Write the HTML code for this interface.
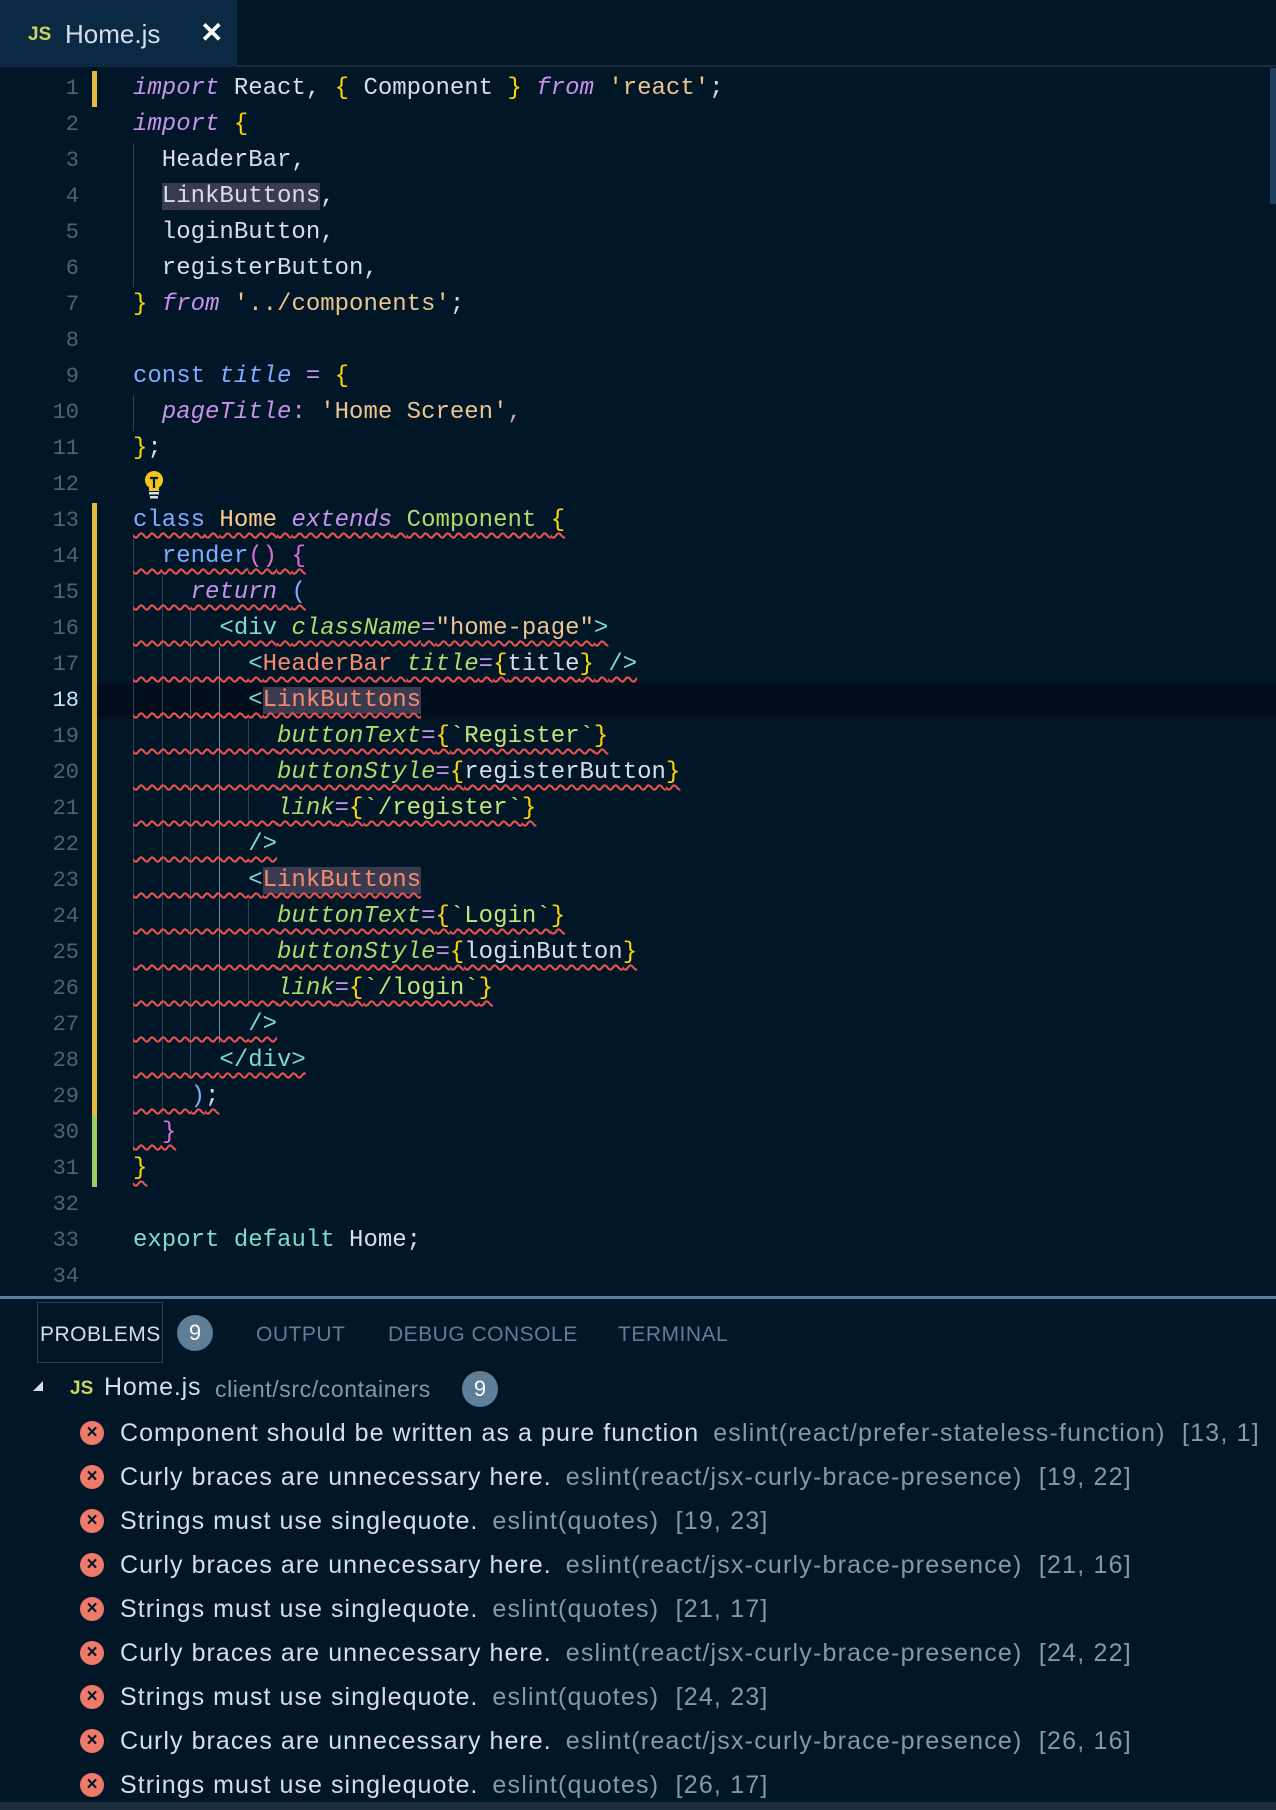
<!DOCTYPE html>
<html><head><meta charset="utf-8"><style>
*{margin:0;padding:0;box-sizing:border-box}
body{width:1276px;height:1810px;background:#011627;position:relative;overflow:hidden;font-family:"Liberation Sans",sans-serif}
.tabbar{position:absolute;left:0;top:0;width:1276px;height:67px;background:#011627;border-bottom:2px solid #1d2d3d}
.tab{position:absolute;left:0;top:0;width:237px;height:67px;background:#0b2942}
.tab .js{position:absolute;left:28px;top:24px;color:#cdd35c;font-weight:bold;font-size:19px}
.tab .nm{position:absolute;left:65px;top:19px;color:#d6deeb;font-size:26px}
.tab .x{position:absolute;left:200px;top:16px;color:#fff;font-size:28px;font-weight:bold}
.wrap{position:absolute;left:0;top:4px;width:1276px;height:1290px}
.ln{position:absolute;left:0;width:79px;text-align:right;font-family:"Liberation Mono",monospace;font-size:22px;line-height:36px;color:#4b6479}
.code{position:absolute;left:133px;font-family:"Liberation Mono",monospace;font-size:24px;line-height:36px;white-space:pre;color:#d6deeb}
.sq{text-decoration:underline wavy #ef5350;text-decoration-thickness:2px;text-underline-offset:6px}
.k{color:#c792ea;font-style:italic}.y{color:#ffd700}.s{color:#ecc48d}.b{color:#82aaff}.bi{color:#82aaff;font-style:italic}
.p{color:#c792ea}.pi{color:#c792ea;font-style:italic}.o{color:#ffcb8b}.g{color:#addb67}.gi{color:#addb67;font-style:italic}
.t{color:#7fdbca}.r{color:#f78c6c}.pk{color:#da70d6}.tl{color:#c5e478}
.hl{background:#3a3a50}
.gd{position:absolute;width:1px;background:#2a4257}
.mk{position:absolute;left:92px;width:5px}
.panel{position:absolute;left:0;top:1296px;width:1276px;height:3px;background:#5f7e97}
.ptab{position:absolute;top:1323px;font-size:21px;color:#637d96;letter-spacing:0.5px}
.badge{position:absolute;width:36px;height:36px;border-radius:50%;background:#5f7e97;color:#fff;font-size:22px;text-align:center;line-height:36px}
.err{position:absolute;left:120px;font-size:25px;color:#d6deeb;white-space:pre;line-height:30px;letter-spacing:1.05px}
.err .src{color:#8399ae;margin-left:6px;letter-spacing:1.2px}
.ic{position:absolute;left:80px;width:24px;height:24px;border-radius:50%;background:#ef7a6a;color:#011627;font-size:19px;font-weight:bold;text-align:center;line-height:24px}
</style></head><body>
<div class="tabbar"><div class="tab"><span class="js">JS</span><span class="nm">Home.js</span><span class="x">✕</span></div></div>
<div style="position:absolute;left:1270px;top:68px;width:6px;height:136px;background:#1e4060"></div>
<div class="wrap">
<div style="position:absolute;left:97px;top:679px;width:1179px;height:36px;background:#010f1c"></div>
<div class="mk" style="top:67px;height:36px;background:#e2b93d"></div>
<div class="mk" style="top:499px;height:612px;background:#e2b93d"></div>
<div class="mk" style="top:1111px;height:72px;background:#9ccc65"></div>
<div class="gd" style="left:133px;top:139px;height:144px"></div>
<div class="gd" style="left:133px;top:391px;height:36px"></div>
<div class="gd" style="left:133px;top:535px;height:612px"></div>
<div class="gd" style="left:162px;top:571px;height:540px"></div>
<div class="gd" style="left:190px;top:607px;height:468px;background:#3d5a75"></div>
<div class="gd" style="left:219px;top:643px;height:396px;background:#6a8aa5"></div>
<div class="gd" style="left:248px;top:715px;height:108px"></div>
<div class="gd" style="left:248px;top:895px;height:108px"></div>
<svg style="position:absolute;left:143px;top:466px" width="22" height="30" viewBox="0 0 22 30"><path d="M11 1a9 9 0 0 0-5 16.5V21h10v-3.5A9 9 0 0 0 11 1z" fill="#f5c518"/><path d="M7 8h8M11 8v10" stroke="#011627" stroke-width="2.2"/><rect x="6" y="22" width="10" height="2.5" fill="#d6deeb"/><rect x="7" y="26" width="8" height="2.5" fill="#d6deeb"/></svg>
<div class="ln" style="top:67px">1</div><div class="ln" style="top:103px">2</div><div class="ln" style="top:139px">3</div><div class="ln" style="top:175px">4</div><div class="ln" style="top:211px">5</div><div class="ln" style="top:247px">6</div><div class="ln" style="top:283px">7</div><div class="ln" style="top:319px">8</div><div class="ln" style="top:355px">9</div><div class="ln" style="top:391px">10</div><div class="ln" style="top:427px">11</div><div class="ln" style="top:463px">12</div><div class="ln" style="top:499px">13</div><div class="ln" style="top:535px">14</div><div class="ln" style="top:571px">15</div><div class="ln" style="top:607px">16</div><div class="ln" style="top:643px">17</div><div class="ln" style="top:679px;color:#c5e4fd">18</div><div class="ln" style="top:715px">19</div><div class="ln" style="top:751px">20</div><div class="ln" style="top:787px">21</div><div class="ln" style="top:823px">22</div><div class="ln" style="top:859px">23</div><div class="ln" style="top:895px">24</div><div class="ln" style="top:931px">25</div><div class="ln" style="top:967px">26</div><div class="ln" style="top:1003px">27</div><div class="ln" style="top:1039px">28</div><div class="ln" style="top:1075px">29</div><div class="ln" style="top:1111px">30</div><div class="ln" style="top:1147px">31</div><div class="ln" style="top:1183px">32</div><div class="ln" style="top:1219px">33</div><div class="ln" style="top:1255px">34</div>

<div class="code" style="top:67px"><span class="k">import</span> React, <span class="y">{</span> Component <span class="y">}</span> <span class="k">from</span> <span class="s">'react'</span>;</div>
<div class="code" style="top:103px"><span class="k">import</span> <span class="y">{</span></div>
<div class="code" style="top:139px">  HeaderBar,</div>
<div class="code" style="top:175px">  <span class="hl">LinkButtons</span>,</div>
<div class="code" style="top:211px">  loginButton,</div>
<div class="code" style="top:247px">  registerButton,</div>
<div class="code" style="top:283px"><span class="y">}</span> <span class="k">from</span> <span class="s">'../components'</span>;</div>
<div class="code" style="top:355px"><span class="b">const</span> <span class="bi">title</span> <span class="p">=</span> <span class="y">{</span></div>
<div class="code" style="top:391px">  <span class="pi">pageTitle</span><span class="p">:</span> <span class="s">'Home Screen'</span><span class="p">,</span></div>
<div class="code" style="top:427px"><span class="y">}</span>;</div>
<div class="code" style="top:499px"><span class="sq"><span class="b">class</span> <span class="o">Home</span> <span class="k">extends</span> <span class="g">Component</span> <span class="y">{</span></span></div>
<div class="code" style="top:535px"><span class="sq">  <span class="b">render</span><span class="pk">()</span> <span class="pk">{</span></span></div>
<div class="code" style="top:571px"><span class="sq">    <span class="k">return</span> <span class="b">(</span></span></div>
<div class="code" style="top:607px"><span class="sq">      <span class="t">&lt;div</span> <span class="gi">className</span><span class="p">=</span><span class="s">"home-page"</span><span class="t">&gt;</span></span></div>
<div class="code" style="top:643px"><span class="sq">        <span class="t">&lt;</span><span class="r">HeaderBar</span> <span class="gi">title</span><span class="p">=</span><span class="y">{</span>title<span class="y">}</span> <span class="t">/&gt;</span></span></div>
<div class="code" style="top:679px"><span class="sq">        <span class="t">&lt;</span><span class="r hl">LinkButtons</span></span></div>
<div class="code" style="top:715px"><span class="sq">          <span class="gi">buttonText</span><span class="p">=</span><span class="y">{</span><span class="tl">`Register`</span><span class="y">}</span></span></div>
<div class="code" style="top:751px"><span class="sq">          <span class="gi">buttonStyle</span><span class="p">=</span><span class="y">{</span>registerButton<span class="y">}</span></span></div>
<div class="code" style="top:787px"><span class="sq">          <span class="gi">link</span><span class="p">=</span><span class="y">{</span><span class="tl">`/register`</span><span class="y">}</span></span></div>
<div class="code" style="top:823px"><span class="sq">        <span class="t">/&gt;</span></span></div>
<div class="code" style="top:859px"><span class="sq">        <span class="t">&lt;</span><span class="r hl">LinkButtons</span></span></div>
<div class="code" style="top:895px"><span class="sq">          <span class="gi">buttonText</span><span class="p">=</span><span class="y">{</span><span class="tl">`Login`</span><span class="y">}</span></span></div>
<div class="code" style="top:931px"><span class="sq">          <span class="gi">buttonStyle</span><span class="p">=</span><span class="y">{</span>loginButton<span class="y">}</span></span></div>
<div class="code" style="top:967px"><span class="sq">          <span class="gi">link</span><span class="p">=</span><span class="y">{</span><span class="tl">`/login`</span><span class="y">}</span></span></div>
<div class="code" style="top:1003px"><span class="sq">        <span class="t">/&gt;</span></span></div>
<div class="code" style="top:1039px"><span class="sq">      <span class="t">&lt;/div&gt;</span></span></div>
<div class="code" style="top:1075px"><span class="sq">    <span class="b">)</span>;</span></div>
<div class="code" style="top:1111px"><span class="sq">  <span class="pk">}</span></span></div>
<div class="code" style="top:1147px"><span class="sq"><span class="y">}</span></span></div>
<div class="code" style="top:1219px"><span class="t">export</span> <span class="t">default</span> Home;</div>
</div>

<div class="panel"></div>
<div style="position:absolute;left:37px;top:1302px;width:126px;height:61px;border:1px solid #2a3f52"></div>
<div class="ptab" style="left:40px;color:#d6deeb">PROBLEMS</div>
<div class="badge" style="left:177px;top:1315px">9</div>
<div class="ptab" style="left:256px">OUTPUT</div>
<div class="ptab" style="left:388px">DEBUG CONSOLE</div>
<div class="ptab" style="left:618px">TERMINAL</div>

<div style="position:absolute;left:33px;top:1381px;width:0;height:0;border-left:10px solid transparent;border-bottom:10px solid #d6deeb"></div>
<div style="position:absolute;left:70px;top:1378px;color:#cdd35c;font-weight:bold;font-size:19px">JS</div>
<div style="position:absolute;left:104px;top:1373px;color:#d6deeb;font-size:25px;letter-spacing:0.8px">Home.js</div>
<div style="position:absolute;left:215px;top:1376px;color:#8399ae;font-size:23px;letter-spacing:0.6px">client/src/containers</div>
<div class="badge" style="left:462px;top:1371px">9</div>

<div class="ic" style="top:1421px">×</div><div class="err" style="top:1418px">Component should be written as a pure function <span class="src">eslint(react/prefer-stateless-function)  [13, 1]</span></div>
<div class="ic" style="top:1465px">×</div><div class="err" style="top:1462px">Curly braces are unnecessary here. <span class="src">eslint(react/jsx-curly-brace-presence)  [19, 22]</span></div>
<div class="ic" style="top:1509px">×</div><div class="err" style="top:1506px">Strings must use singlequote. <span class="src">eslint(quotes)  [19, 23]</span></div>
<div class="ic" style="top:1553px">×</div><div class="err" style="top:1550px">Curly braces are unnecessary here. <span class="src">eslint(react/jsx-curly-brace-presence)  [21, 16]</span></div>
<div class="ic" style="top:1597px">×</div><div class="err" style="top:1594px">Strings must use singlequote. <span class="src">eslint(quotes)  [21, 17]</span></div>
<div class="ic" style="top:1641px">×</div><div class="err" style="top:1638px">Curly braces are unnecessary here. <span class="src">eslint(react/jsx-curly-brace-presence)  [24, 22]</span></div>
<div class="ic" style="top:1685px">×</div><div class="err" style="top:1682px">Strings must use singlequote. <span class="src">eslint(quotes)  [24, 23]</span></div>
<div class="ic" style="top:1729px">×</div><div class="err" style="top:1726px">Curly braces are unnecessary here. <span class="src">eslint(react/jsx-curly-brace-presence)  [26, 16]</span></div>
<div class="ic" style="top:1773px">×</div><div class="err" style="top:1770px">Strings must use singlequote. <span class="src">eslint(quotes)  [26, 17]</span></div>
<div style="position:absolute;left:0;top:1802px;width:1276px;height:8px;background:#1d2d3d"></div>
</body></html>
